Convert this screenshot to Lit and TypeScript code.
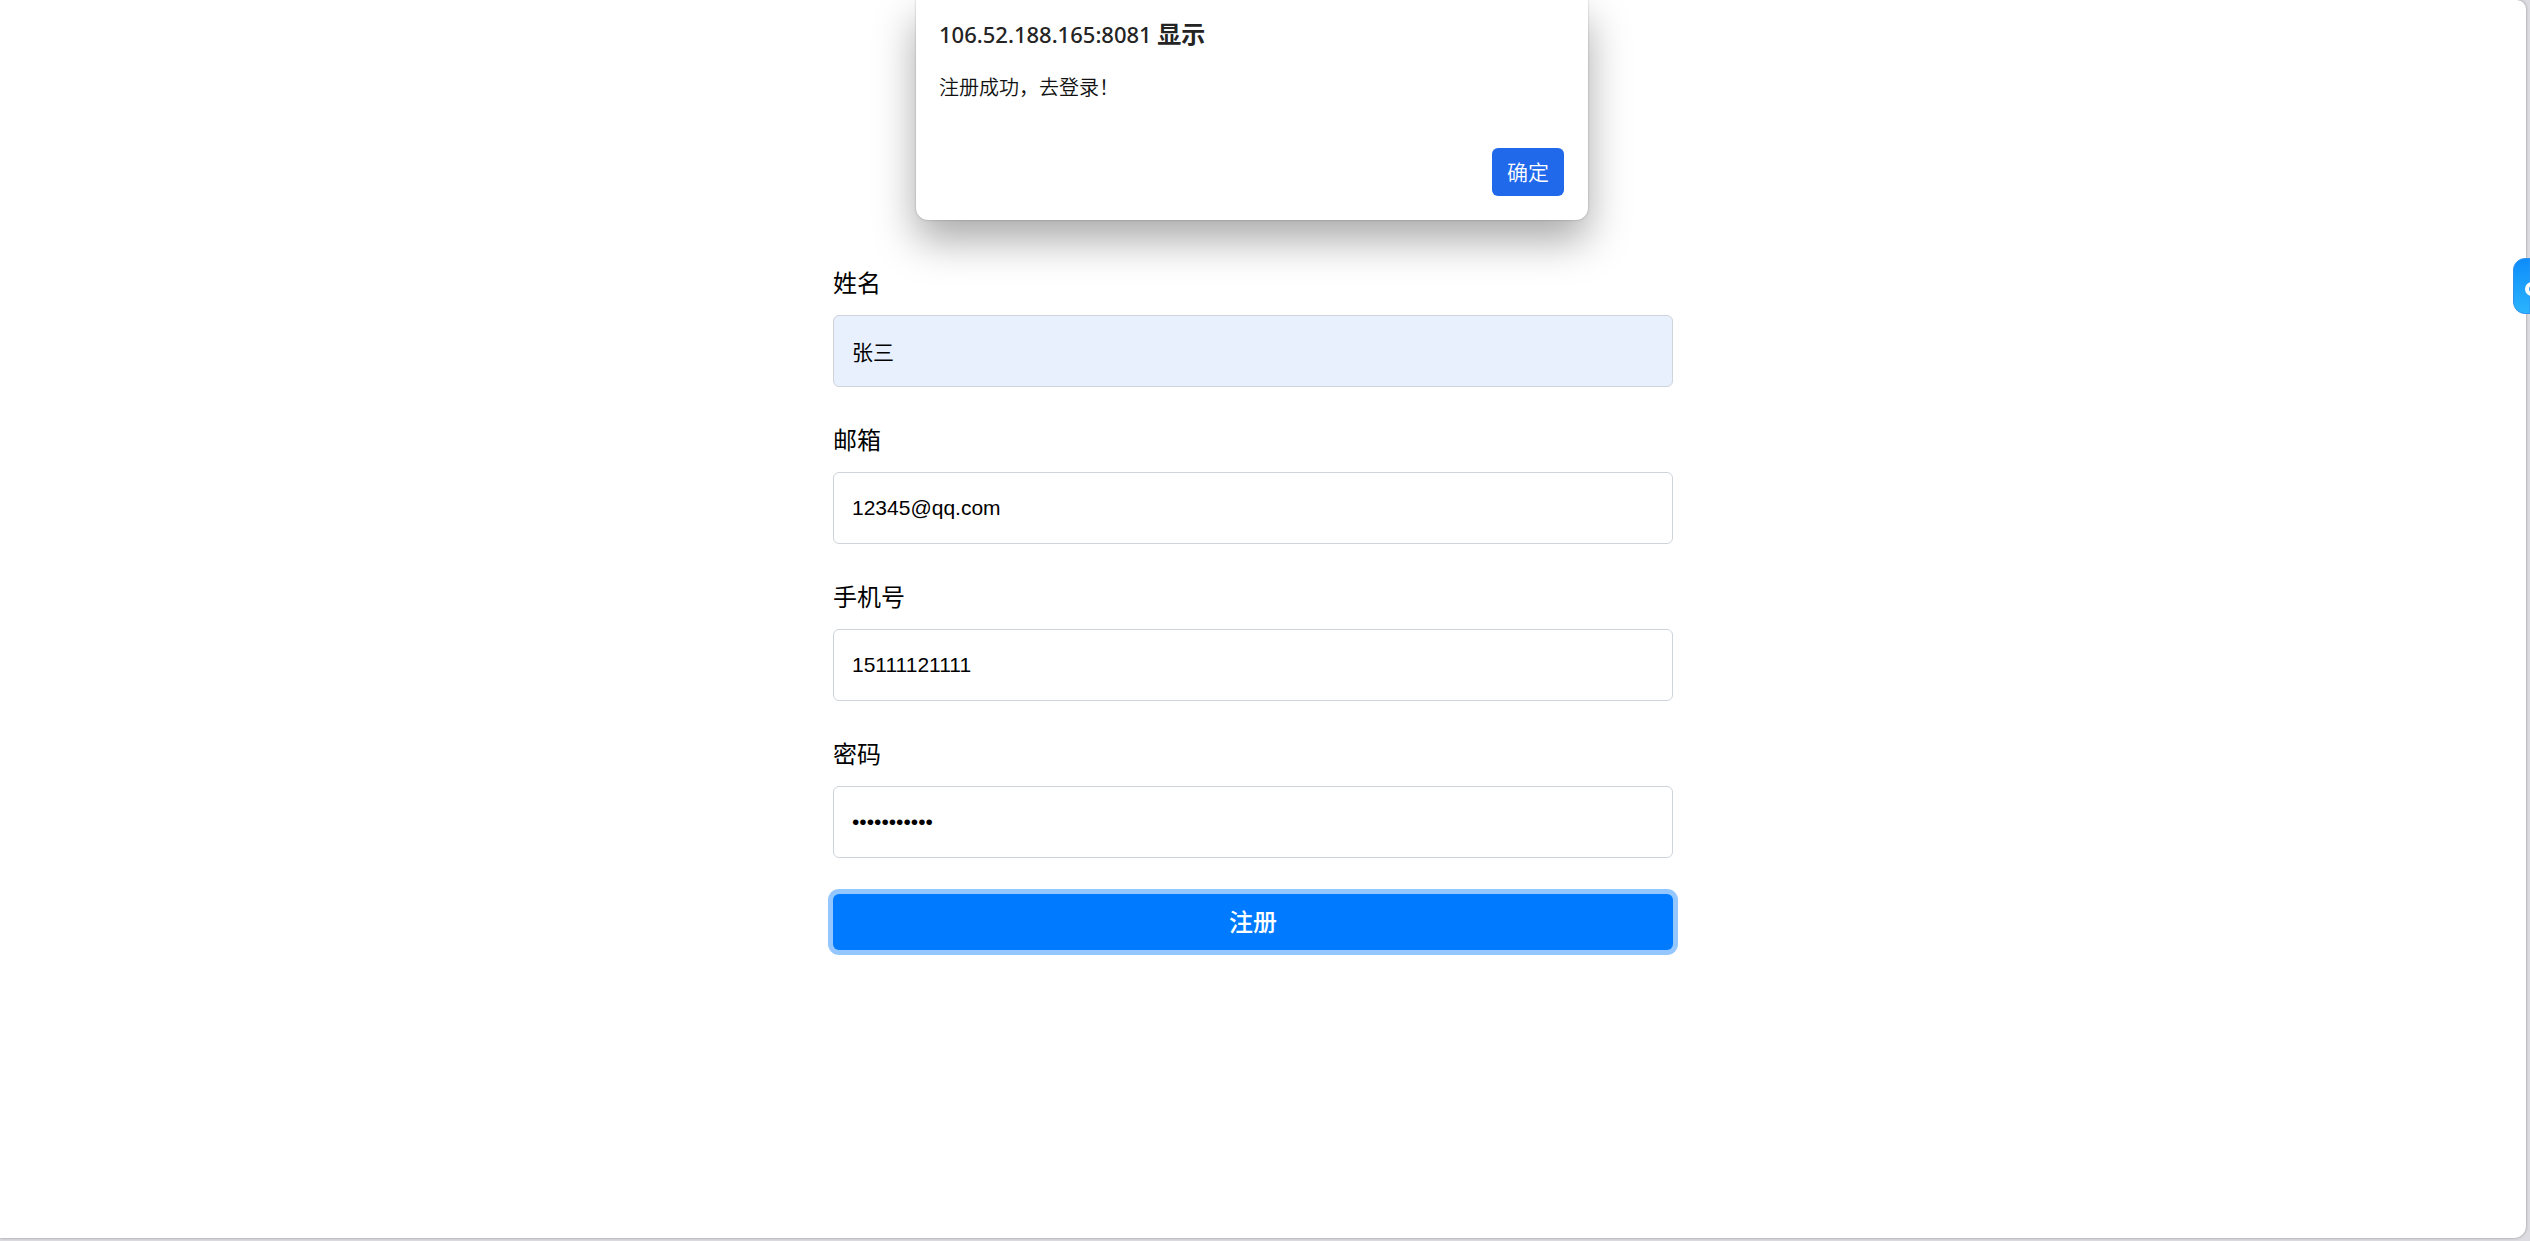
import { LitElement, html, css, svg } from "lit";
import { customElement, property } from "lit/decorators.js";

const sans = css`"Liberation Sans", Arial, "Noto Sans CJK SC", sans-serif`;

@customElement("form-field")
class FormField extends LitElement {
  @property() label = "";
  @property() type = "text";
  @property() value = "";
  @property({ type: Boolean, reflect: true }) filled = false;

  static styles = css`
    :host {
      display: flex;
      flex-direction: column;
      gap: 17px;
    }
    .label {
      font: 400 24px/32px "Noto Sans CJK SC", sans-serif;
      color: #000;
      align-self: flex-start;
    }
    .input {
      box-sizing: border-box;
      width: 100%;
      height: 72px;
      padding: 0 18px;
      border: 1px solid #ced4da;
      border-radius: 6px;
      background: #fff;
      color: #000;
      font: 400 21px/30px ${sans};
      outline: none;
    }
    :host([filled]) .input {
      background: #e8f0fe;
    }
  `;

  render() {
    return html`
      <label class="label" for="control">${this.label}</label>
      <input class="input" id="control" type=${this.type} .value=${this.value} autocomplete="off" />
    `;
  }
}

@customElement("alert-dialog")
class AlertDialog extends LitElement {
  @property() host = "";
  @property() message = "";

  static styles = css`
    :host {
      display: block;
    }
    .panel {
      display: flex;
      flex-direction: column;
      padding: 15px 24px 24px 23px;
      background: #fff;
      border-radius: 0 0 12px 12px;
      box-shadow: 0 0 2px rgba(0, 0, 0, 0.3), 0 20px 42px rgba(0, 0, 0, 0.34);
      color: #242424;
      font-family: "Noto Sans CJK SC", sans-serif;
    }
    .title {
      margin: 0 0 18px;
      font-size: 24px;
      font-weight: 700;
      line-height: 36px;
    }
    .origin {
      font-family: "Noto Sans", sans-serif;
      font-size: 22px;
      font-weight: 500;
    }
    .message {
      margin: 0 0 45px;
      color: #111;
      font-size: 20px;
      font-weight: 350;
      line-height: 33px;
    }
    .confirm {
      align-self: flex-end;
      width: 72px;
      height: 48px;
      padding: 0 0 2px;
      border: 0;
      border-radius: 6px;
      background: #2169eb;
      color: #fff;
      font: 350 21px/30px "Noto Sans CJK SC", sans-serif;
    }
  `;

  render() {
    return html`
      <div class="panel" role="alertdialog" aria-labelledby="title" aria-describedby="message">
        <h2 class="title" id="title"><span class="origin">${this.host}</span> 显示</h2>
        <p class="message" id="message">${this.message}</p>
        <button class="confirm" type="button">确定</button>
      </div>
    `;
  }
}

const fields = [
  { label: "姓名", type: "text", value: "张三", filled: true },
  { label: "邮箱", type: "email", value: "12345@qq.com", filled: false },
  { label: "手机号", type: "tel", value: "15111121111", filled: false },
  { label: "密码", type: "password", value: "12345678901", filled: false },
];

const badge = svg`
  <defs>
    <linearGradient id="fill" x1="0" y1="0" x2="0" y2="1">
      <stop offset="0" stop-color="#0d8cfb" />
      <stop offset="1" stop-color="#2cb4fd" />
    </linearGradient>
  </defs>
  <path d="M17 0.5H12A11.5 11.5 0 0 0 0.5 12V44A11.5 11.5 0 0 0 12 55.5H17Z" fill="url(#fill)" stroke="#2f93ee" />
  <circle cx="19" cy="31" r="5" fill="none" stroke="#fff" stroke-width="4" />
`;

@customElement("app-root")
class AppRoot extends LitElement {
  static styles = css`
    :host {
      display: block;
      position: relative;
      box-sizing: border-box;
      min-height: 100vh;
      padding: 0 4px 3px 0;
      background: #dcdce1;
      overflow: hidden;
    }
    .page {
      box-sizing: border-box;
      min-height: calc(100vh - 3px);
      padding: 266px 44px 48px 24px;
      background: #fff;
      border-radius: 0 9px 12px 0;
      box-shadow: 0 0 3px rgba(0, 0, 0, 0.35);
    }
    .form {
      display: flex;
      flex-direction: column;
      gap: 36px;
      max-width: 840px;
      margin: 0 auto;
    }
    .submit {
      height: 56px;
      padding: 0 0 3px;
      border: 0;
      border-radius: 6px;
      background: #007bff;
      box-shadow: 0 0 0 5px #94c7ff;
      color: #fff;
      font: 500 24px/36px "Noto Sans CJK SC", sans-serif;
    }
    .dialog {
      position: absolute;
      top: 0;
      left: 0;
      right: 26px;
      width: 672px;
      max-width: 100%;
      margin: 0 auto;
    }
    .badge {
      position: absolute;
      top: 258px;
      right: 0;
      width: 17px;
      height: 56px;
      padding: 0;
      border: 0;
      background: none;
    }
    .badge-art {
      display: block;
    }
  `;

  render() {
    return html`
      <main class="page">
        <form class="form">
          ${fields.map(
            (f) => html`<form-field
              .label=${f.label}
              .type=${f.type}
              .value=${f.value}
              ?filled=${f.filled}
            ></form-field>`
          )}
          <button class="submit" type="button">注册</button>
        </form>
      </main>
      <alert-dialog class="dialog" host="106.52.188.165:8081" message="注册成功，去登录！"></alert-dialog>
      <button class="badge" type="button" aria-label="侧边栏">
        <svg class="badge-art" width="17" height="56" viewBox="0 0 17 56" aria-hidden="true">${badge}</svg>
      </button>
    `;
  }
}
